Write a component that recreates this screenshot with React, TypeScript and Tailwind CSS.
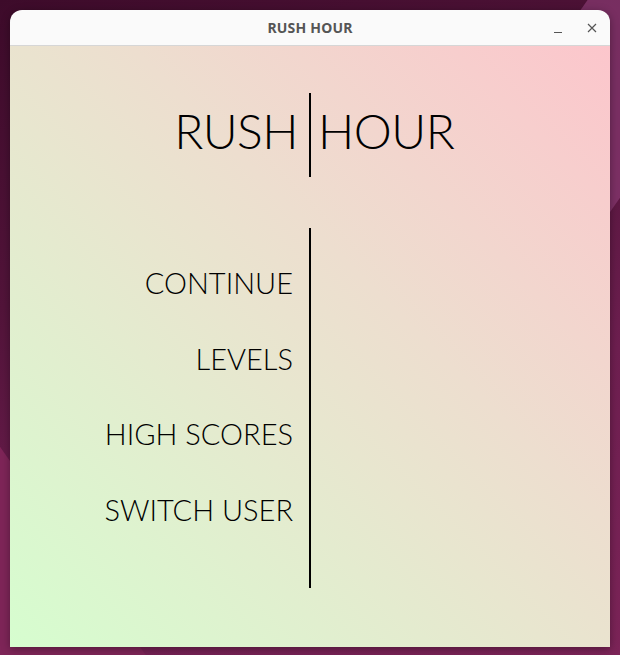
import React from "react";

const menu = ["CONTINUE", "LEVELS", "HIGH SCORES", "SWITCH USER"];

export default function App() {
  return (
    <div className="relative w-[620px] h-[655px] overflow-hidden bg-[linear-gradient(160deg,#3d0b2a_0%,#52143a_35%,#6e1f50_65%,#7c2458_100%)]">
      <div className="absolute right-[-60px] top-[-40px] w-[140px] h-[260px] rotate-[35deg] bg-[#8a3a74] opacity-70" />
      <div className="absolute left-[-40px] top-[430px] w-[120px] h-[300px] rotate-[-35deg] bg-[#7e2558]" />
      <div className="absolute left-[10px] top-[10px] w-[600px] h-[637px] flex flex-col rounded-t-[12px] overflow-hidden shadow-[0_2px_8px_rgba(0,0,0,0.35)]">
        <div className="relative h-[36px] shrink-0 bg-[#fafafa] border-b border-[#d6d6d6] flex items-center justify-center">
          <span className="font-['Noto_Sans',sans-serif] font-bold text-[14px] text-[#555555] tracking-[0.2px]">RUSH HOUR</span>
          <svg className="absolute left-[543px] top-[17px]" width="10" height="10" viewBox="0 0 10 10">
            <line x1="1" y1="5.5" x2="9" y2="5.5" stroke="#555" strokeWidth="1.2" />
          </svg>
          <svg className="absolute left-[577px] top-[13px]" width="10" height="10" viewBox="0 0 10 10">
            <path d="M1 1 L9 9 M9 1 L1 9" stroke="#555" strokeWidth="1.2" />
          </svg>
        </div>
        <div className="flex-1 flex flex-col bg-[linear-gradient(to_top_right,#d6fdcf_0%,#e8e6cf_45%,#eddecf_60%,#fcc6cc_100%)] font-['Lato',sans-serif] text-black">
          <div className="mt-[47px] flex items-center h-[84px]">
            <div className="w-[299px] text-right pr-[11px] pb-[8px] text-[48px] tracking-[-0.5px] leading-none font-light">RUSH</div>
            <div className="w-[2px] h-[84px] bg-black" />
            <div className="pl-[7px] pb-[8px] text-[48px] tracking-[-0.5px] leading-none font-light">HOUR</div>
          </div>
          <div className="mt-[51px] flex">
            <div className="w-[299px] flex flex-col items-end pr-[16px] pt-[17px]">
              {menu.map((m) => (
                <div key={m} className="text-[29px] leading-[75.5px] font-light">{m}</div>
              ))}
            </div>
            <div className="w-[2px] h-[360px] bg-black" />
          </div>
        </div>
      </div>
    </div>
  );
}
